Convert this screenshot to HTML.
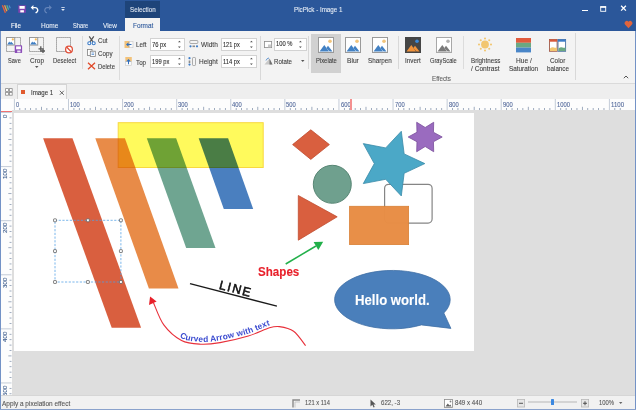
<!DOCTYPE html>
<html><head><meta charset="utf-8"><style>
html,body{margin:0;padding:0}
body{width:636px;height:410px;overflow:hidden;position:relative;font-family:"Liberation Sans",sans-serif;background:#f3f3f3}
.a{position:absolute}
.t{position:absolute;white-space:nowrap;line-height:1;transform-origin:0 0;-webkit-text-stroke:0.1px currentColor}
svg{overflow:visible}
</style></head><body>
<div class="a" style="left:0px;top:0px;width:636px;height:410px;background:#f3f3f3"></div>
<div class="a" style="left:0px;top:0px;width:636px;height:30.5px;background:#2b579a"></div>
<div class="a" style="left:125px;top:1px;width:35px;height:17px;background:#1e4479"></div>
<div class="t" style="left:129.60px;top:5.61px;font-size:7.2px;color:#dfe6f0;transform:scaleX(0.868);">Selection</div>
<div class="t" style="left:293.80px;top:5.51px;font-size:7.2px;color:#e8eef6;transform:scaleX(0.866);">PicPick - Image 1</div>
<div class="t" style="left:10.90px;top:22.01px;font-size:7.2px;color:#ffffff;transform:scaleX(0.853);">File</div>
<div class="t" style="left:40.50px;top:22.31px;font-size:7.2px;color:#e8eef6;transform:scaleX(0.906);">Home</div>
<div class="t" style="left:73.00px;top:22.31px;font-size:7.2px;color:#e8eef6;transform:scaleX(0.796);">Share</div>
<div class="t" style="left:102.70px;top:22.31px;font-size:7.2px;color:#e8eef6;transform:scaleX(0.898);">View</div>
<div class="a" style="left:125px;top:18px;width:35px;height:13px;background:#f3f3f3"></div>
<div class="t" style="left:132.50px;top:22.41px;font-size:7.2px;color:#2b579a;transform:scaleX(0.890);">Format</div>
<svg class="a" style="left:2px;top:5px;" width="10" height="9" viewBox="0 0 10 9"><path d="M0.4 0.2 L3.4 7.8" stroke="#e8603a" stroke-width="1.3"/><path d="M2.6 0.2 L4.9 6.3" stroke="#f0a040" stroke-width="1.3"/><path d="M4.8 0.2 L6.5 4.8" stroke="#58b090" stroke-width="1.3"/><path d="M7.1 0.4 L8.3 3.2" stroke="#4a90d0" stroke-width="1.2"/></svg>
<svg class="a" style="left:18px;top:5px;" width="9" height="9" viewBox="0 0 9 9"><rect x="0.3" y="0.3" width="7.5" height="7.5" fill="#8243b0"/><rect x="1.5" y="1" width="5.2" height="2.8" fill="#fff"/><rect x="2.3" y="5.2" width="3.6" height="2.2" fill="#fff"/></svg>
<svg class="a" style="left:30px;top:4px;" width="10" height="10" viewBox="0 0 10 10"><path d="M2.8 3.6 H5 A2.6 2.6 0 0 1 6.8 8.2 L5.6 9" fill="none" stroke="#fff" stroke-width="1.4"/><path d="M0.7 3.6 L3.4 1 V6.2 Z" fill="#fff"/></svg>
<svg class="a" style="left:43px;top:4px;" width="10" height="10" viewBox="0 0 10 10"><path d="M6.2 3.6 H4.5 A2.6 2.6 0 0 0 2.7 8.2 L3.9 9" fill="none" stroke="#6585ba" stroke-width="1.2"/><path d="M8.8 3.6 L6.1 1 V6.2 Z" fill="#6585ba"/></svg>
<svg class="a" style="left:60px;top:7px;" width="6" height="5" viewBox="0 0 6 5"><rect x="1.3" y="0.2" width="3.4" height="0.8" fill="#e8eef8"/><path d="M1.2 2 H4.8 L3 4 Z" fill="#e8eef8"/></svg>
<div class="a" style="left:582px;top:9.5px;width:5.5px;height:1.2px;background:#fff"></div>
<svg class="a" style="left:600px;top:5.6px;" width="7" height="7" viewBox="0 0 7 7"><rect x="0.7" y="0.7" width="5" height="4.6" fill="none" stroke="#fff" stroke-width="0.9"/><rect x="0.3" y="0.3" width="5.8" height="1.5" fill="#fff"/></svg>
<svg class="a" style="left:619.5px;top:5.2px;" width="7" height="7" viewBox="0 0 7 7"><path d="M1.1 0.8 L5.9 5.6 M5.9 0.8 L1.1 5.6" stroke="#fff" stroke-width="1.3"/></svg>
<svg class="a" style="left:624px;top:20px;" width="9" height="9" viewBox="0 0 9 9"><path d="M4.5 8.2 L1 4.6 A2 2 0 0 1 4.5 1.8 A2 2 0 0 1 8 4.6 Z" fill="#e0643c"/></svg>
<div class="a" style="left:0px;top:83px;width:636px;height:1px;background:#dadada"></div>
<div class="a" style="left:1px;top:84px;width:634px;height:14.5px;background:#eeeeee"></div>
<svg class="a" style="left:6px;top:37px;" width="17" height="17" viewBox="0 0 17 17"><rect x="0.5" y="0.5" width="14" height="14" fill="none" stroke="#6a6a6a" stroke-width="0.9" stroke-dasharray="1.1 0.9"/><rect x="0.5" y="0.5" width="8.2" height="7.6" fill="#fff" stroke="#9a9a9a" stroke-width="1"/><path d="M1.3 7.4 L3.2 4.6 L4.2 5.8 L5.2 4.8 L7.9 7.4 Z" fill="#3f7fc4"/><circle cx="6.8" cy="2.4" r="1.1" fill="#f5b955"/><rect x="8.7" y="8.2" width="7.4" height="7.8" rx="0.7" fill="#8b4db8"/><rect x="10.1" y="9.4" width="4.8" height="2.9" fill="#fff"/><rect x="11.2" y="13.5" width="3.3" height="1.9" fill="#f0e8f6"/></svg>
<div class="t" style="left:8.00px;top:56.90px;font-size:7.8px;color:#3c3c3c;transform:scaleX(0.720);">Save</div>
<svg class="a" style="left:29px;top:37px;" width="17" height="17" viewBox="0 0 17 17"><rect x="0.5" y="0.5" width="14" height="14" fill="none" stroke="#6a6a6a" stroke-width="0.9" stroke-dasharray="1.1 0.9"/><rect x="0.5" y="0.5" width="8.2" height="7.6" fill="#fff" stroke="#9a9a9a" stroke-width="1"/><path d="M1.3 7.4 L3.2 4.6 L4.2 5.8 L5.2 4.8 L7.9 7.4 Z" fill="#3f7fc4"/><circle cx="6.8" cy="2.4" r="1.1" fill="#f5b955"/><path d="M11.8 9.2 V14 H16 M9.5 11.8 H14 V16" fill="none" stroke="#5a5a5a" stroke-width="1.3"/></svg>
<div class="a" style="left:29px;top:54.2px;width:16px;height:1px;background:#e0e0e0"></div>
<div class="t" style="left:30.00px;top:56.90px;font-size:7.8px;color:#3c3c3c;transform:scaleX(0.828);">Crop</div>
<svg class="a" style="left:34.5px;top:66px;" width="4" height="3" viewBox="0 0 4 3"><path d="M0 0 H3.5 L1.75 2 Z" fill="#555"/></svg>
<svg class="a" style="left:56px;top:37px;" width="18" height="17" viewBox="0 0 18 17"><rect x="0.5" y="0.5" width="14" height="14" fill="none" stroke="#6a6a6a" stroke-width="0.9" stroke-dasharray="1.1 0.9"/><circle cx="13" cy="12.5" r="3.4" fill="#fff" stroke="#e0503a" stroke-width="1.3"/><path d="M10.8 10.3 L15.2 14.7" stroke="#e0503a" stroke-width="1.3"/></svg>
<div class="t" style="left:53.00px;top:56.90px;font-size:7.8px;color:#3c3c3c;transform:scaleX(0.761);">Deselect</div>
<div class="a" style="left:82px;top:36px;width:0.9px;height:33px;background:#dcdcdc"></div>
<svg class="a" style="left:87px;top:36px;" width="9" height="10" viewBox="0 0 9 10"><path d="M2.2 0.3 L6 5.8 M6.8 0.3 L3 5.8" stroke="#555" stroke-width="1.2"/><circle cx="2.3" cy="7.2" r="1.5" fill="#fff" stroke="#3c7cc8" stroke-width="1.1"/><circle cx="6.7" cy="7.2" r="1.5" fill="#fff" stroke="#3c7cc8" stroke-width="1.1"/></svg>
<div class="t" style="left:98.10px;top:36.80px;font-size:7.8px;color:#3c3c3c;transform:scaleX(0.783);">Cut</div>
<svg class="a" style="left:87px;top:49px;" width="9" height="8" viewBox="0 0 9 8"><rect x="0.5" y="0.5" width="4.5" height="6" fill="#fff" stroke="#808080" stroke-width="0.8"/><rect x="3.3" y="2.2" width="5" height="5.3" fill="#fff" stroke="#808080" stroke-width="0.8"/><path d="M4.5 4 H7 M4.5 5.5 H7" stroke="#3c7cc8" stroke-width="0.7"/></svg>
<div class="t" style="left:98.10px;top:49.90px;font-size:7.8px;color:#3c3c3c;transform:scaleX(0.796);">Copy</div>
<svg class="a" style="left:87px;top:62px;" width="9" height="8" viewBox="0 0 9 8"><path d="M1 0.8 L8 7.2 M8 0.8 L1 7.2" stroke="#e04a2a" stroke-width="1.3"/></svg>
<div class="t" style="left:98.10px;top:62.60px;font-size:7.8px;color:#3c3c3c;transform:scaleX(0.754);">Delete</div>
<div class="a" style="left:118.6px;top:36px;width:0.9px;height:44px;background:#dcdcdc"></div>
<svg class="a" style="left:124px;top:41px;" width="10" height="8" viewBox="0 0 10 8"><rect x="0.5" y="0" width="5.5" height="7" fill="#f2c27a"/><rect x="5.5" y="0.5" width="3.5" height="6.2" fill="#fafafa" stroke="#c8c8c8" stroke-width="0.6"/><path d="M2 3.5 L4.5 1.3 V5.7 Z" fill="#2f6fc0"/><rect x="4" y="3" width="3.5" height="1" fill="#2f6fc0"/></svg>
<div class="t" style="left:136.10px;top:41.20px;font-size:7.8px;color:#3c3c3c;transform:scaleX(0.807);">Left</div>
<svg class="a" style="left:125px;top:57px;" width="8" height="9" viewBox="0 0 8 9"><rect x="0.3" y="0" width="6.5" height="5" fill="#f2c27a"/><rect x="0.5" y="4.5" width="6" height="3.8" fill="#fafafa" stroke="#c8c8c8" stroke-width="0.6"/><path d="M3.5 2 L1.2 4.6 H5.8 Z" fill="#2f6fc0"/><rect x="3" y="4" width="1" height="3.2" fill="#2f6fc0"/></svg>
<div class="t" style="left:136.10px;top:58.80px;font-size:7.8px;color:#3c3c3c;transform:scaleX(0.803);">Top</div>
<div class="a" style="left:150px;top:38px;width:35px;height:13px;background:#fff;border:0.9px solid #d2d2d2;box-sizing:border-box"></div>
<div class="t" style="left:152.10px;top:40.51px;font-size:7.2px;color:#2a2a2a;transform:scaleX(0.812);">76 px</div>
<svg class="a" style="left:176.5px;top:39px;" width="5" height="9" viewBox="0 0 5 9"><path d="M1 3.3 L2.4 1.8 L3.8 3.3 Z" fill="#505050"/><path d="M1 7.4 L2.4 8.9 L3.8 7.4 Z" fill="#505050"/></svg>
<div class="a" style="left:150px;top:55.4px;width:35px;height:13px;background:#fff;border:0.9px solid #d2d2d2;box-sizing:border-box"></div>
<div class="t" style="left:152.10px;top:57.91px;font-size:7.2px;color:#2a2a2a;transform:scaleX(0.805);">199 px</div>
<svg class="a" style="left:176.5px;top:56.4px;" width="5" height="9" viewBox="0 0 5 9"><path d="M1 3.3 L2.4 1.8 L3.8 3.3 Z" fill="#505050"/><path d="M1 7.4 L2.4 8.9 L3.8 7.4 Z" fill="#505050"/></svg>
<svg class="a" style="left:189px;top:40px;" width="10" height="8" viewBox="0 0 10 8"><rect x="0.8" y="0.5" width="8" height="3" rx="0.8" fill="#f4f4f4" stroke="#8c8c8c" stroke-width="0.7"/><circle cx="1.5" cy="6.3" r="1.1" fill="#3c7cc8"/><circle cx="8" cy="6.3" r="1.1" fill="#3c7cc8"/><rect x="3.5" y="5.5" width="2.5" height="1.6" fill="#8c8c8c"/></svg>
<div class="t" style="left:201.20px;top:40.70px;font-size:7.8px;color:#3c3c3c;transform:scaleX(0.843);">Width</div>
<svg class="a" style="left:188px;top:57px;" width="9" height="9" viewBox="0 0 9 9"><rect x="4.5" y="0.5" width="3" height="8" rx="0.8" fill="#f4f4f4" stroke="#8c8c8c" stroke-width="0.7"/><circle cx="1.5" cy="1.2" r="1.1" fill="#3c7cc8"/><circle cx="1.5" cy="7.6" r="1.1" fill="#3c7cc8"/><rect x="0.7" y="3.5" width="1.6" height="2.5" fill="#8c8c8c"/></svg>
<div class="t" style="left:199.20px;top:58.30px;font-size:7.8px;color:#3c3c3c;transform:scaleX(0.834);">Height</div>
<div class="a" style="left:221px;top:38px;width:36px;height:13px;background:#fff;border:0.9px solid #d2d2d2;box-sizing:border-box"></div>
<div class="t" style="left:223.00px;top:40.51px;font-size:7.2px;color:#2a2a2a;transform:scaleX(0.777);">121 px</div>
<svg class="a" style="left:248.5px;top:39px;" width="5" height="9" viewBox="0 0 5 9"><path d="M1 3.3 L2.4 1.8 L3.8 3.3 Z" fill="#505050"/><path d="M1 7.4 L2.4 8.9 L3.8 7.4 Z" fill="#505050"/></svg>
<div class="a" style="left:221px;top:55.4px;width:36px;height:13px;background:#fff;border:0.9px solid #d2d2d2;box-sizing:border-box"></div>
<div class="t" style="left:223.00px;top:57.91px;font-size:7.2px;color:#2a2a2a;transform:scaleX(0.806);">114 px</div>
<svg class="a" style="left:248.5px;top:56.4px;" width="5" height="9" viewBox="0 0 5 9"><path d="M1 3.3 L2.4 1.8 L3.8 3.3 Z" fill="#505050"/><path d="M1 7.4 L2.4 8.9 L3.8 7.4 Z" fill="#505050"/></svg>
<div class="a" style="left:259.5px;top:36px;width:0.8px;height:44px;background:#d8d8d8"></div>
<svg class="a" style="left:264px;top:41px;" width="8" height="7" viewBox="0 0 8 7"><rect x="0.4" y="0.4" width="7.2" height="6.2" fill="#fff" stroke="#8c8c8c" stroke-width="0.8"/><rect x="4" y="3.5" width="3.2" height="2.8" fill="#c8c8c8"/></svg>
<div class="a" style="left:274px;top:38px;width:32.5px;height:13px;background:#fff;border:0.9px solid #d2d2d2;box-sizing:border-box"></div>
<div class="t" style="left:275.80px;top:39.91px;font-size:7.2px;color:#2a2a2a;transform:scaleX(0.808);">100 %</div>
<svg class="a" style="left:298.0px;top:39px;" width="5" height="9" viewBox="0 0 5 9"><path d="M1 3.3 L2.4 1.8 L3.8 3.3 Z" fill="#505050"/><path d="M1 7.4 L2.4 8.9 L3.8 7.4 Z" fill="#505050"/></svg>
<svg class="a" style="left:264px;top:57px;" width="9" height="8" viewBox="0 0 9 8"><path d="M0.5 7.5 L5.5 1.5 L8.5 7.5 Z" fill="#c8c8c8"/><path d="M5.5 1.5 L8.5 7.5 H5.5 Z" fill="#707070"/><path d="M2 3.5 Q3 1 5 1" fill="none" stroke="#3c7cc8" stroke-width="0.8"/></svg>
<div class="t" style="left:274.20px;top:57.90px;font-size:7.8px;color:#3c3c3c;transform:scaleX(0.783);">Rotate</div>
<svg class="a" style="left:301px;top:60px;" width="4" height="3" viewBox="0 0 4 3"><path d="M0 0 H3.5 L1.75 2 Z" fill="#555"/></svg>
<div class="a" style="left:308.3px;top:36px;width:0.8px;height:33px;background:#d8d8d8"></div>
<div class="a" style="left:311px;top:34px;width:29.8px;height:38.5px;background:#d1d1d1"></div>
<svg class="a" style="left:318px;top:37px;" width="16" height="16" viewBox="0 0 16 16"><rect x="0.5" y="0.5" width="15" height="15" fill="#fff" stroke="#9a9a9a" stroke-width="1"/><circle cx="12" cy="4.2" r="1.8" fill="#f2c47a"/><path d="M1.5 14.5 L6.3 8 L11 14.5 Z" fill="#4381c3"/><path d="M8.3 11 L10 8.8 L14.5 14.5 H11.5 Z" fill="#4381c3"/></svg>
<div class="t" style="left:316.20px;top:57.10px;font-size:7.8px;color:#3c3c3c;transform:scaleX(0.750);">Pixelate</div>
<svg class="a" style="left:345px;top:37px;" width="16" height="16" viewBox="0 0 16 16"><rect x="0.5" y="0.5" width="15" height="15" fill="#fff" stroke="#9a9a9a" stroke-width="1"/><circle cx="12" cy="4.2" r="1.8" fill="#f2c47a"/><path d="M1.5 14.5 L6.3 8 L11 14.5 Z" fill="#4381c3"/><path d="M8.3 11 L10 8.8 L14.5 14.5 H11.5 Z" fill="#4381c3"/></svg>
<div class="t" style="left:347.20px;top:57.10px;font-size:7.8px;color:#3c3c3c;transform:scaleX(0.851);">Blur</div>
<svg class="a" style="left:372px;top:37px;" width="16" height="16" viewBox="0 0 16 16"><rect x="0.5" y="0.5" width="15" height="15" fill="#fff" stroke="#9a9a9a" stroke-width="1"/><circle cx="12" cy="4.2" r="1.8" fill="#f2c47a"/><path d="M1.5 14.5 L6.3 8 L11 14.5 Z" fill="#4381c3"/><path d="M8.3 11 L10 8.8 L14.5 14.5 H11.5 Z" fill="#4381c3"/></svg>
<div class="t" style="left:368.20px;top:57.10px;font-size:7.8px;color:#3c3c3c;transform:scaleX(0.807);">Sharpen</div>
<div class="a" style="left:398px;top:36px;width:0.8px;height:33px;background:#d8d8d8"></div>
<svg class="a" style="left:405px;top:37px;" width="16" height="16" viewBox="0 0 16 16"><rect x="0.5" y="0.5" width="15" height="15" fill="#454545" stroke="#454545" stroke-width="1"/><circle cx="12" cy="4.2" r="1.8" fill="#3a88d8"/><path d="M1.5 14.5 L6.3 8 L11 14.5 Z" fill="#f0923a"/><path d="M8.3 11 L10 8.8 L14.5 14.5 H11.5 Z" fill="#f0923a"/></svg>
<div class="t" style="left:405.20px;top:57.10px;font-size:7.8px;color:#3c3c3c;transform:scaleX(0.810);">Invert</div>
<svg class="a" style="left:435.5px;top:37px;" width="16" height="16" viewBox="0 0 16 16"><rect x="0.5" y="0.5" width="15" height="15" fill="#fff" stroke="#a8a8a8" stroke-width="1"/><circle cx="12" cy="4.2" r="1.8" fill="#b0b0b0"/><path d="M1.5 14.5 L6.3 8 L11 14.5 Z" fill="#7a7a7a"/><path d="M8.3 11 L10 8.8 L14.5 14.5 H11.5 Z" fill="#7a7a7a"/></svg>
<div class="t" style="left:430.20px;top:57.10px;font-size:7.8px;color:#3c3c3c;transform:scaleX(0.736);">GrayScale</div>
<div class="t" style="left:432.40px;top:75.21px;font-size:7.2px;color:#606060;transform:scaleX(0.869);">Effects</div>
<div class="a" style="left:463.1px;top:36px;width:0.9px;height:33px;background:#dcdcdc"></div>
<svg class="a" style="left:477px;top:37px;" width="16" height="16" viewBox="0 0 16 16"><circle cx="8" cy="7.5" r="3.9" fill="#f2c670"/><circle cx="14.00" cy="7.50" r="1.05" fill="#f2c670"/><circle cx="12.24" cy="11.74" r="1.05" fill="#f2c670"/><circle cx="8.00" cy="13.50" r="1.05" fill="#f2c670"/><circle cx="3.76" cy="11.74" r="1.05" fill="#f2c670"/><circle cx="2.00" cy="7.50" r="1.05" fill="#f2c670"/><circle cx="3.76" cy="3.26" r="1.05" fill="#f2c670"/><circle cx="8.00" cy="1.50" r="1.05" fill="#f2c670"/><circle cx="12.24" cy="3.26" r="1.05" fill="#f2c670"/></svg>
<div class="t" style="left:470.60px;top:57.20px;font-size:7.8px;color:#3c3c3c;transform:scaleX(0.798);">Brightness</div>
<div class="t" style="left:471.00px;top:64.80px;font-size:7.8px;color:#3c3c3c;transform:scaleX(0.846);">/ Contrast</div>
<svg class="a" style="left:516px;top:38px;" width="15" height="15" viewBox="0 0 15 15"><rect x="0" y="0" width="15" height="4.8" fill="#e05a3c"/><rect x="0" y="4.8" width="15" height="4.8" fill="#6aa882"/><rect x="0" y="9.6" width="15" height="4.8" fill="#4a86c8"/></svg>
<div class="t" style="left:515.50px;top:57.20px;font-size:7.8px;color:#3c3c3c;transform:scaleX(0.848);">Hue /</div>
<div class="t" style="left:508.90px;top:64.80px;font-size:7.8px;color:#3c3c3c;transform:scaleX(0.818);">Saturation</div>
<svg class="a" style="left:549px;top:39px;" width="17" height="13" viewBox="0 0 17 13"><rect x="0.5" y="0.5" width="7.6" height="11.8" fill="#fff" stroke="#a05a48" stroke-width="0.9"/><rect x="0.5" y="0.5" width="7.6" height="2.2" fill="#d8583a"/><path d="M1 12 V9.5 Q3 7.8 5 8.6 Q6.8 9.2 8 8.4 V12 Z" fill="#f2c670"/><rect x="9" y="0.5" width="7.6" height="11.8" fill="#fff" stroke="#4a70a0" stroke-width="0.9"/><rect x="9" y="0.5" width="7.6" height="2.2" fill="#3c7cc8"/><path d="M9.5 12 V9.5 Q11.5 7.8 13.5 8.6 Q15.3 9.2 16.5 8.4 V12 Z" fill="#6aa882"/></svg>
<div class="t" style="left:550.40px;top:57.20px;font-size:7.8px;color:#3c3c3c;transform:scaleX(0.821);">Color</div>
<div class="t" style="left:547.00px;top:64.80px;font-size:7.8px;color:#3c3c3c;transform:scaleX(0.805);">balance</div>
<div class="a" style="left:575.2px;top:33px;width:0.8px;height:47px;background:#d8d8d8"></div>
<svg class="a" style="left:623px;top:75px;" width="6" height="4" viewBox="0 0 6 4"><path d="M0.8 3.2 L3 1 L5.2 3.2" fill="none" stroke="#555" stroke-width="1"/></svg>
<svg class="a" style="left:4.5px;top:87.8px;" width="8" height="8" viewBox="0 0 8 8"><rect x="0.6" y="0.6" width="2.8" height="2.8" fill="#fff" stroke="#8a8a8a" stroke-width="0.8"/><rect x="4.4" y="0.6" width="2.8" height="2.8" fill="#fff" stroke="#8a8a8a" stroke-width="0.8"/><rect x="0.6" y="4.4" width="2.8" height="2.8" fill="#fff" stroke="#8a8a8a" stroke-width="0.8"/><rect x="4.4" y="4.4" width="2.8" height="2.8" fill="#fff" stroke="#8a8a8a" stroke-width="0.8"/></svg>
<div class="a" style="left:16.5px;top:84px;width:50px;height:15px;background:#f6f6f6;border:0.8px solid #d4d4d4;border-bottom:none;box-sizing:border-box"></div>
<div class="a" style="left:21px;top:90px;width:4px;height:4px;background:#e05a2e"></div>
<div class="t" style="left:31.00px;top:89.21px;font-size:7.2px;color:#333;transform:scaleX(0.853);">Image 1</div>
<svg class="a" style="left:58.5px;top:89.5px;" width="6" height="6" viewBox="0 0 6 6"><path d="M0.8 0.8 L4.8 4.8 M4.8 0.8 L0.8 4.8" stroke="#555" stroke-width="0.9"/></svg>
<div class="a" style="left:1px;top:98.5px;width:634px;height:11px;background:#fdfdfd"></div>
<div class="a" style="left:1px;top:98.5px;width:10.5px;height:297px;background:#fdfdfd"></div>
<svg class="a" style="left:0px;top:98.5px;" width="636" height="11" viewBox="0 0 636 11"><rect x="13.90" y="0" width="1" height="11" fill="#c4ccd8"/><rect x="19.41" y="9" width="0.8" height="2" fill="#8898b0"/><rect x="24.82" y="9" width="0.8" height="2" fill="#8898b0"/><rect x="30.23" y="9" width="0.8" height="2" fill="#8898b0"/><rect x="35.64" y="9" width="0.8" height="2" fill="#8898b0"/><rect x="41.05" y="7.8" width="0.8" height="3.2" fill="#8898b0"/><rect x="46.45" y="9" width="0.8" height="2" fill="#8898b0"/><rect x="51.86" y="9" width="0.8" height="2" fill="#8898b0"/><rect x="57.27" y="9" width="0.8" height="2" fill="#8898b0"/><rect x="62.68" y="9" width="0.8" height="2" fill="#8898b0"/><rect x="67.99" y="0" width="1" height="11" fill="#c4ccd8"/><rect x="73.50" y="9" width="0.8" height="2" fill="#8898b0"/><rect x="78.91" y="9" width="0.8" height="2" fill="#8898b0"/><rect x="84.32" y="9" width="0.8" height="2" fill="#8898b0"/><rect x="89.73" y="9" width="0.8" height="2" fill="#8898b0"/><rect x="95.14" y="7.8" width="0.8" height="3.2" fill="#8898b0"/><rect x="100.54" y="9" width="0.8" height="2" fill="#8898b0"/><rect x="105.95" y="9" width="0.8" height="2" fill="#8898b0"/><rect x="111.36" y="9" width="0.8" height="2" fill="#8898b0"/><rect x="116.77" y="9" width="0.8" height="2" fill="#8898b0"/><rect x="122.08" y="0" width="1" height="11" fill="#c4ccd8"/><rect x="127.59" y="9" width="0.8" height="2" fill="#8898b0"/><rect x="133.00" y="9" width="0.8" height="2" fill="#8898b0"/><rect x="138.41" y="9" width="0.8" height="2" fill="#8898b0"/><rect x="143.82" y="9" width="0.8" height="2" fill="#8898b0"/><rect x="149.23" y="7.8" width="0.8" height="3.2" fill="#8898b0"/><rect x="154.63" y="9" width="0.8" height="2" fill="#8898b0"/><rect x="160.04" y="9" width="0.8" height="2" fill="#8898b0"/><rect x="165.45" y="9" width="0.8" height="2" fill="#8898b0"/><rect x="170.86" y="9" width="0.8" height="2" fill="#8898b0"/><rect x="176.17" y="0" width="1" height="11" fill="#c4ccd8"/><rect x="181.68" y="9" width="0.8" height="2" fill="#8898b0"/><rect x="187.09" y="9" width="0.8" height="2" fill="#8898b0"/><rect x="192.50" y="9" width="0.8" height="2" fill="#8898b0"/><rect x="197.91" y="9" width="0.8" height="2" fill="#8898b0"/><rect x="203.32" y="7.8" width="0.8" height="3.2" fill="#8898b0"/><rect x="208.72" y="9" width="0.8" height="2" fill="#8898b0"/><rect x="214.13" y="9" width="0.8" height="2" fill="#8898b0"/><rect x="219.54" y="9" width="0.8" height="2" fill="#8898b0"/><rect x="224.95" y="9" width="0.8" height="2" fill="#8898b0"/><rect x="230.26" y="0" width="1" height="11" fill="#c4ccd8"/><rect x="235.77" y="9" width="0.8" height="2" fill="#8898b0"/><rect x="241.18" y="9" width="0.8" height="2" fill="#8898b0"/><rect x="246.59" y="9" width="0.8" height="2" fill="#8898b0"/><rect x="252.00" y="9" width="0.8" height="2" fill="#8898b0"/><rect x="257.41" y="7.8" width="0.8" height="3.2" fill="#8898b0"/><rect x="262.81" y="9" width="0.8" height="2" fill="#8898b0"/><rect x="268.22" y="9" width="0.8" height="2" fill="#8898b0"/><rect x="273.63" y="9" width="0.8" height="2" fill="#8898b0"/><rect x="279.04" y="9" width="0.8" height="2" fill="#8898b0"/><rect x="284.35" y="0" width="1" height="11" fill="#c4ccd8"/><rect x="289.86" y="9" width="0.8" height="2" fill="#8898b0"/><rect x="295.27" y="9" width="0.8" height="2" fill="#8898b0"/><rect x="300.68" y="9" width="0.8" height="2" fill="#8898b0"/><rect x="306.09" y="9" width="0.8" height="2" fill="#8898b0"/><rect x="311.50" y="7.8" width="0.8" height="3.2" fill="#8898b0"/><rect x="316.90" y="9" width="0.8" height="2" fill="#8898b0"/><rect x="322.31" y="9" width="0.8" height="2" fill="#8898b0"/><rect x="327.72" y="9" width="0.8" height="2" fill="#8898b0"/><rect x="333.13" y="9" width="0.8" height="2" fill="#8898b0"/><rect x="338.44" y="0" width="1" height="11" fill="#c4ccd8"/><rect x="343.95" y="9" width="0.8" height="2" fill="#8898b0"/><rect x="349.36" y="9" width="0.8" height="2" fill="#8898b0"/><rect x="354.77" y="9" width="0.8" height="2" fill="#8898b0"/><rect x="360.18" y="9" width="0.8" height="2" fill="#8898b0"/><rect x="365.59" y="7.8" width="0.8" height="3.2" fill="#8898b0"/><rect x="370.99" y="9" width="0.8" height="2" fill="#8898b0"/><rect x="376.40" y="9" width="0.8" height="2" fill="#8898b0"/><rect x="381.81" y="9" width="0.8" height="2" fill="#8898b0"/><rect x="387.22" y="9" width="0.8" height="2" fill="#8898b0"/><rect x="392.53" y="0" width="1" height="11" fill="#c4ccd8"/><rect x="398.04" y="9" width="0.8" height="2" fill="#8898b0"/><rect x="403.45" y="9" width="0.8" height="2" fill="#8898b0"/><rect x="408.86" y="9" width="0.8" height="2" fill="#8898b0"/><rect x="414.27" y="9" width="0.8" height="2" fill="#8898b0"/><rect x="419.68" y="7.8" width="0.8" height="3.2" fill="#8898b0"/><rect x="425.08" y="9" width="0.8" height="2" fill="#8898b0"/><rect x="430.49" y="9" width="0.8" height="2" fill="#8898b0"/><rect x="435.90" y="9" width="0.8" height="2" fill="#8898b0"/><rect x="441.31" y="9" width="0.8" height="2" fill="#8898b0"/><rect x="446.62" y="0" width="1" height="11" fill="#c4ccd8"/><rect x="452.13" y="9" width="0.8" height="2" fill="#8898b0"/><rect x="457.54" y="9" width="0.8" height="2" fill="#8898b0"/><rect x="462.95" y="9" width="0.8" height="2" fill="#8898b0"/><rect x="468.36" y="9" width="0.8" height="2" fill="#8898b0"/><rect x="473.77" y="7.8" width="0.8" height="3.2" fill="#8898b0"/><rect x="479.17" y="9" width="0.8" height="2" fill="#8898b0"/><rect x="484.58" y="9" width="0.8" height="2" fill="#8898b0"/><rect x="489.99" y="9" width="0.8" height="2" fill="#8898b0"/><rect x="495.40" y="9" width="0.8" height="2" fill="#8898b0"/><rect x="500.71" y="0" width="1" height="11" fill="#c4ccd8"/><rect x="506.22" y="9" width="0.8" height="2" fill="#8898b0"/><rect x="511.63" y="9" width="0.8" height="2" fill="#8898b0"/><rect x="517.04" y="9" width="0.8" height="2" fill="#8898b0"/><rect x="522.45" y="9" width="0.8" height="2" fill="#8898b0"/><rect x="527.86" y="7.8" width="0.8" height="3.2" fill="#8898b0"/><rect x="533.26" y="9" width="0.8" height="2" fill="#8898b0"/><rect x="538.67" y="9" width="0.8" height="2" fill="#8898b0"/><rect x="544.08" y="9" width="0.8" height="2" fill="#8898b0"/><rect x="549.49" y="9" width="0.8" height="2" fill="#8898b0"/><rect x="554.80" y="0" width="1" height="11" fill="#c4ccd8"/><rect x="560.31" y="9" width="0.8" height="2" fill="#8898b0"/><rect x="565.72" y="9" width="0.8" height="2" fill="#8898b0"/><rect x="571.13" y="9" width="0.8" height="2" fill="#8898b0"/><rect x="576.54" y="9" width="0.8" height="2" fill="#8898b0"/><rect x="581.95" y="7.8" width="0.8" height="3.2" fill="#8898b0"/><rect x="587.35" y="9" width="0.8" height="2" fill="#8898b0"/><rect x="592.76" y="9" width="0.8" height="2" fill="#8898b0"/><rect x="598.17" y="9" width="0.8" height="2" fill="#8898b0"/><rect x="603.58" y="9" width="0.8" height="2" fill="#8898b0"/><rect x="608.89" y="0" width="1" height="11" fill="#c4ccd8"/><rect x="614.40" y="9" width="0.8" height="2" fill="#8898b0"/><rect x="619.81" y="9" width="0.8" height="2" fill="#8898b0"/></svg>
<div class="t" style="left:16.00px;top:102.01px;font-size:6.6px;color:#52689a;transform:scaleX(0.845);">0</div>
<div class="t" style="left:70.09px;top:102.01px;font-size:6.6px;color:#52689a;transform:scaleX(0.881);">100</div>
<div class="t" style="left:124.18px;top:102.01px;font-size:6.6px;color:#52689a;transform:scaleX(0.881);">200</div>
<div class="t" style="left:178.27px;top:102.01px;font-size:6.6px;color:#52689a;transform:scaleX(0.881);">300</div>
<div class="t" style="left:232.36px;top:102.01px;font-size:6.6px;color:#52689a;transform:scaleX(0.881);">400</div>
<div class="t" style="left:286.45px;top:102.01px;font-size:6.6px;color:#52689a;transform:scaleX(0.881);">500</div>
<div class="t" style="left:340.54px;top:102.01px;font-size:6.6px;color:#52689a;transform:scaleX(0.881);">600</div>
<div class="t" style="left:394.63px;top:102.01px;font-size:6.6px;color:#52689a;transform:scaleX(0.881);">700</div>
<div class="t" style="left:448.72px;top:102.01px;font-size:6.6px;color:#52689a;transform:scaleX(0.881);">800</div>
<div class="t" style="left:502.81px;top:102.01px;font-size:6.6px;color:#52689a;transform:scaleX(0.881);">900</div>
<div class="t" style="left:556.90px;top:102.01px;font-size:6.6px;color:#52689a;transform:scaleX(0.886);">1000</div>
<div class="t" style="left:610.99px;top:102.01px;font-size:6.6px;color:#52689a;transform:scaleX(0.916);">1100</div>
<div class="a" style="left:350.3px;top:98.5px;width:1.3px;height:11px;background:#f49090"></div>
<svg class="a" style="left:1px;top:0px;" width="11" height="410" viewBox="0 0 11 410"><rect x="0" y="112.00" width="10.5" height="1" fill="#c4ccd8"/><rect x="8.5" y="117.51" width="2" height="0.8" fill="#8898b0"/><rect x="8.5" y="122.92" width="2" height="0.8" fill="#8898b0"/><rect x="8.5" y="128.33" width="2" height="0.8" fill="#8898b0"/><rect x="8.5" y="133.74" width="2" height="0.8" fill="#8898b0"/><rect x="7.3" y="139.15" width="3.2" height="0.8" fill="#8898b0"/><rect x="8.5" y="144.55" width="2" height="0.8" fill="#8898b0"/><rect x="8.5" y="149.96" width="2" height="0.8" fill="#8898b0"/><rect x="8.5" y="155.37" width="2" height="0.8" fill="#8898b0"/><rect x="8.5" y="160.78" width="2" height="0.8" fill="#8898b0"/><rect x="0" y="166.09" width="10.5" height="1" fill="#c4ccd8"/><rect x="8.5" y="171.60" width="2" height="0.8" fill="#8898b0"/><rect x="8.5" y="177.01" width="2" height="0.8" fill="#8898b0"/><rect x="8.5" y="182.42" width="2" height="0.8" fill="#8898b0"/><rect x="8.5" y="187.83" width="2" height="0.8" fill="#8898b0"/><rect x="7.3" y="193.23" width="3.2" height="0.8" fill="#8898b0"/><rect x="8.5" y="198.64" width="2" height="0.8" fill="#8898b0"/><rect x="8.5" y="204.05" width="2" height="0.8" fill="#8898b0"/><rect x="8.5" y="209.46" width="2" height="0.8" fill="#8898b0"/><rect x="8.5" y="214.87" width="2" height="0.8" fill="#8898b0"/><rect x="0" y="220.18" width="10.5" height="1" fill="#c4ccd8"/><rect x="8.5" y="225.69" width="2" height="0.8" fill="#8898b0"/><rect x="8.5" y="231.10" width="2" height="0.8" fill="#8898b0"/><rect x="8.5" y="236.51" width="2" height="0.8" fill="#8898b0"/><rect x="8.5" y="241.92" width="2" height="0.8" fill="#8898b0"/><rect x="7.3" y="247.33" width="3.2" height="0.8" fill="#8898b0"/><rect x="8.5" y="252.73" width="2" height="0.8" fill="#8898b0"/><rect x="8.5" y="258.14" width="2" height="0.8" fill="#8898b0"/><rect x="8.5" y="263.55" width="2" height="0.8" fill="#8898b0"/><rect x="8.5" y="268.96" width="2" height="0.8" fill="#8898b0"/><rect x="0" y="274.27" width="10.5" height="1" fill="#c4ccd8"/><rect x="8.5" y="279.78" width="2" height="0.8" fill="#8898b0"/><rect x="8.5" y="285.19" width="2" height="0.8" fill="#8898b0"/><rect x="8.5" y="290.60" width="2" height="0.8" fill="#8898b0"/><rect x="8.5" y="296.01" width="2" height="0.8" fill="#8898b0"/><rect x="7.3" y="301.42" width="3.2" height="0.8" fill="#8898b0"/><rect x="8.5" y="306.82" width="2" height="0.8" fill="#8898b0"/><rect x="8.5" y="312.23" width="2" height="0.8" fill="#8898b0"/><rect x="8.5" y="317.64" width="2" height="0.8" fill="#8898b0"/><rect x="8.5" y="323.05" width="2" height="0.8" fill="#8898b0"/><rect x="0" y="328.36" width="10.5" height="1" fill="#c4ccd8"/><rect x="8.5" y="333.87" width="2" height="0.8" fill="#8898b0"/><rect x="8.5" y="339.28" width="2" height="0.8" fill="#8898b0"/><rect x="8.5" y="344.69" width="2" height="0.8" fill="#8898b0"/><rect x="8.5" y="350.10" width="2" height="0.8" fill="#8898b0"/><rect x="7.3" y="355.51" width="3.2" height="0.8" fill="#8898b0"/><rect x="8.5" y="360.91" width="2" height="0.8" fill="#8898b0"/><rect x="8.5" y="366.32" width="2" height="0.8" fill="#8898b0"/><rect x="8.5" y="371.73" width="2" height="0.8" fill="#8898b0"/><rect x="8.5" y="377.14" width="2" height="0.8" fill="#8898b0"/><rect x="0" y="382.45" width="10.5" height="1" fill="#c4ccd8"/><rect x="8.5" y="387.96" width="2" height="0.8" fill="#8898b0"/><rect x="8.5" y="393.37" width="2" height="0.8" fill="#8898b0"/></svg>
<div class="t" style="left:2.3px;top:118.10px;font-size:6.2px;color:#3a5a8a;transform:rotate(-90deg);transform-origin:0 0">0</div>
<div class="t" style="left:2.3px;top:179.39px;font-size:6.2px;color:#3a5a8a;transform:rotate(-90deg);transform-origin:0 0">100</div>
<div class="t" style="left:2.3px;top:233.48px;font-size:6.2px;color:#3a5a8a;transform:rotate(-90deg);transform-origin:0 0">200</div>
<div class="t" style="left:2.3px;top:287.57px;font-size:6.2px;color:#3a5a8a;transform:rotate(-90deg);transform-origin:0 0">300</div>
<div class="t" style="left:2.3px;top:341.66px;font-size:6.2px;color:#3a5a8a;transform:rotate(-90deg);transform-origin:0 0">400</div>
<div class="t" style="left:2.3px;top:395.75px;font-size:6.2px;color:#3a5a8a;transform:rotate(-90deg);transform-origin:0 0">500</div>
<div class="a" style="left:1px;top:110.9px;width:10.5px;height:0.9px;background:#f07070"></div>
<div class="a" style="left:11.5px;top:109.5px;width:623.5px;height:286px;background:#dedede"></div>
<div class="a" style="left:13.5px;top:112.5px;width:460px;height:238.4px;background:#ffffff"></div>
<svg class="a" style="left:0px;top:0px;" width="636" height="410" viewBox="0 0 636 410"><path d="M43.1 138.2 H72.5 L141.1 327.7 H111.7 Z" fill="#d95f3f"/><path d="M95.3 138.2 H124.9 L178.5 288.4 H148.9 Z" fill="#e88b48"/><path d="M146.8 138.2 H176.10000000000002 L215.5 248.1 H186.2 Z" fill="#6fa591"/><path d="M198.7 138.2 H228.1 L253.20000000000002 208.9 H223.8 Z" fill="#4a7fbf"/><rect x="118.2" y="122.7" width="145" height="44.8" fill="#fffa5c" stroke="#f8d840" stroke-width="1" style="mix-blend-mode:multiply"/><path d="M292.6 144.6 L310.8 129.8 L329.4 144.6 L310.8 159.4 Z" fill="#d95f3f" stroke="#c04c30" stroke-width="0.8"/><circle cx="332.3" cy="184.3" r="19" fill="#6fa08e" stroke="#4f7f6d" stroke-width="0.9"/><path d="M298.3 195.5 L337.2 216.8 L298.3 240.2 Z" fill="#d95f3f" stroke="#c04c30" stroke-width="0.8"/><rect x="384.6" y="184.3" width="47.5" height="38.8" rx="4" fill="none" stroke="#858585" stroke-width="1.2"/><path d="M424.80 163.60 L404.15 173.30 L401.31 195.94 L385.70 179.29 L363.29 183.58 L374.30 163.60 L363.29 143.62 L385.70 147.91 L401.31 131.26 L404.15 153.90 Z" fill="#4ba8c7" stroke="#3a8aa8" stroke-width="0.8"/><path d="M442.20 137.00 L433.43 141.75 L433.70 151.72 L425.20 146.50 L416.70 151.72 L416.97 141.75 L408.20 137.00 L416.97 132.25 L416.70 122.28 L425.20 127.50 L433.70 122.28 L433.43 132.25 Z" fill="#9a6bbf" stroke="#7a4e9c" stroke-width="0.8"/><rect x="349.6" y="206.3" width="59" height="38.3" fill="#e88d45" fill-opacity="0.985" stroke="#d98035" stroke-width="0.8"/><path d="M285.7 264 L316 246" stroke="#22b04a" stroke-width="1.5"/><path d="M323.2 241.8 L313.6 242 L318.3 250 Z" fill="#22b04a"/><path d="M190 283.6 L276.9 306.2" stroke="#1a1a1a" stroke-width="1.3"/><path d="M443.8 313 A57.8 29.2 0 1 0 421.4 324.9 L450.9 328.4 Z" fill="#4a7fbb" stroke="#3f6fa5" stroke-width="0.8"/><path d="M305.6 345.6 C303.60 343.20 297.97 334.37 293.6 331.2 C289.23 328.03 283.42 327.17 279.4 326.6 C275.38 326.03 274.68 326.23 269.5 327.8 C264.32 329.37 256.55 333.53 248.3 336.0 C240.05 338.47 227.95 341.23 220 342.6 C212.05 343.97 207.02 344.55 200.6 344.2 C194.18 343.85 187.60 343.67 181.5 340.5 C175.40 337.33 168.68 331.53 164 325.2 C159.32 318.87 155.17 306.28 153.4 302.5" fill="none" stroke="#e8303a" stroke-width="1.1"/><path d="M150.1 296.4 L149 305 L156.6 301.6 Z" fill="#e8202a"/><defs><path id="cp" d="M153.4 300.1 C155.17 303.88 159.32 316.47 164 322.8 C168.68 329.13 175.40 334.93 181.5 338.1 C187.60 341.27 194.18 341.45 200.6 341.8 C207.02 342.15 212.05 341.57 220 340.20000000000005 C227.95 338.83 240.05 336.07 248.3 333.6 C256.55 331.13 264.32 326.97 269.5 325.40000000000003 C274.68 323.83 275.38 323.63 279.4 324.20000000000005 C283.42 324.77 289.23 325.63 293.6 328.8 C297.97 331.97 303.60 340.80 305.6 343.20000000000005"/></defs><text font-family="Liberation Sans" font-weight="bold" font-size="8.3" fill="#3b4bd0" letter-spacing="0.15"><textPath href="#cp" startOffset="46.3">Curved Arrow with text</textPath></text><rect x="55" y="220.3" width="65.9" height="61.7" fill="none" stroke="#4f9fe6" stroke-width="0.75" stroke-dasharray="2.2 1.5"/><rect x="53.55" y="218.85000000000002" width="2.9" height="2.9" rx="0.5" fill="#fff" stroke="#505050" stroke-width="0.7"/><rect x="53.55" y="249.65" width="2.9" height="2.9" rx="0.5" fill="#fff" stroke="#505050" stroke-width="0.7"/><rect x="53.55" y="280.55" width="2.9" height="2.9" rx="0.5" fill="#fff" stroke="#505050" stroke-width="0.7"/><rect x="86.45" y="218.85000000000002" width="2.9" height="2.9" rx="0.5" fill="#fff" stroke="#505050" stroke-width="0.7"/><rect x="86.45" y="280.55" width="2.9" height="2.9" rx="0.5" fill="#fff" stroke="#505050" stroke-width="0.7"/><rect x="119.45" y="218.85000000000002" width="2.9" height="2.9" rx="0.5" fill="#fff" stroke="#505050" stroke-width="0.7"/><rect x="119.45" y="249.65" width="2.9" height="2.9" rx="0.5" fill="#fff" stroke="#505050" stroke-width="0.7"/><rect x="119.45" y="280.55" width="2.9" height="2.9" rx="0.5" fill="#fff" stroke="#505050" stroke-width="0.7"/></svg>
<div class="t" style="left:258.20px;top:266.36px;font-size:12.8px;color:#e8202a;font-weight:bold;transform:scaleX(0.907);">Shapes</div>
<div class="t" style="left:355.10px;top:292.65px;font-size:14px;color:#ffffff;font-weight:bold;transform:scaleX(0.940);">Hello world.</div>
<div class="t" style="left:221.2px;top:278.8px;font-size:12.4px;color:#111;-webkit-text-stroke:0.55px #111;transform:rotate(14.5deg);transform-origin:0 0;letter-spacing:1.5px">LINE</div>
<div class="a" style="left:1px;top:395px;width:634px;height:14px;background:#f1f1f1;border-top:0.8px solid #d6d6d6;box-sizing:border-box"></div>
<div class="t" style="left:2.20px;top:399.71px;font-size:7.2px;color:#555;transform:scaleX(0.900);">Apply a pixelation effect</div>
<svg class="a" style="left:291.5px;top:398.5px;" width="9" height="9" viewBox="0 0 9 9"><path d="M1 8.5 V1 H8" fill="none" stroke="#8a8a8a" stroke-width="1.4"/><path d="M3 8.5 V3 H8" fill="none" stroke="#c0c0c0" stroke-width="0.8"/></svg>
<div class="t" style="left:305.20px;top:399.41px;font-size:7.2px;color:#555;transform:scaleX(0.807);">121 x 114</div>
<svg class="a" style="left:369.5px;top:398.5px;" width="6" height="9" viewBox="0 0 6 9"><path d="M0.5 0.5 V7.5 L2.3 5.8 L3.6 8.5 L4.7 8 L3.5 5.4 H5.8 Z" fill="#555"/></svg>
<div class="t" style="left:381.20px;top:399.41px;font-size:7.2px;color:#555;transform:scaleX(0.852);">622, -3</div>
<svg class="a" style="left:443.5px;top:398.5px;" width="9" height="9" viewBox="0 0 9 9"><rect x="0.5" y="0.5" width="8" height="8" fill="#fff" stroke="#8a8a8a" stroke-width="0.8"/><path d="M1.5 7.5 L3.8 4.5 L5.5 6.5 L6.3 5.5 L7.5 7.5 Z" fill="#606060"/><circle cx="6.5" cy="2.5" r="0.9" fill="#808080"/></svg>
<div class="t" style="left:455.20px;top:399.41px;font-size:7.2px;color:#555;transform:scaleX(0.857);">849 x 440</div>
<svg class="a" style="left:516.5px;top:398.5px;" width="8" height="8.5" viewBox="0 0 8 8.5"><rect x="0.4" y="0.4" width="7.2" height="7.6" fill="#e6e6e6" stroke="#b8b8b8" stroke-width="0.8"/><rect x="2" y="3.8" width="4" height="0.9" fill="#444"/></svg>
<div class="a" style="left:528px;top:401.3px;width:49px;height:2px;background:#e4e4e4;border:0.6px solid #d4d4d4;box-sizing:border-box"></div>
<div class="a" style="left:551.2px;top:399.2px;width:2.8px;height:5.4px;background:#3b88e0;border-radius:0.6px"></div>
<svg class="a" style="left:580.8px;top:398.5px;" width="8" height="8.5" viewBox="0 0 8 8.5"><rect x="0.4" y="0.4" width="7.2" height="7.6" fill="#e6e6e6" stroke="#b8b8b8" stroke-width="0.8"/><rect x="2" y="3.8" width="4" height="0.9" fill="#444"/><rect x="3.55" y="2.25" width="0.9" height="4" fill="#444"/></svg>
<div class="t" style="left:598.60px;top:399.41px;font-size:7.2px;color:#555;transform:scaleX(0.815);">100%</div>
<svg class="a" style="left:618.5px;top:401.5px;" width="4" height="3" viewBox="0 0 4 3"><path d="M0 0 H3.4 L1.7 2 Z" fill="#666"/></svg>
<div class="a" style="left:0px;top:30.5px;width:1px;height:379.5px;background:#7392c6"></div>
<div class="a" style="left:635px;top:30.5px;width:1px;height:379.5px;background:#7392c6"></div>
<div class="a" style="left:0px;top:409px;width:636px;height:1px;background:#8aa2cc"></div>
</body></html>
